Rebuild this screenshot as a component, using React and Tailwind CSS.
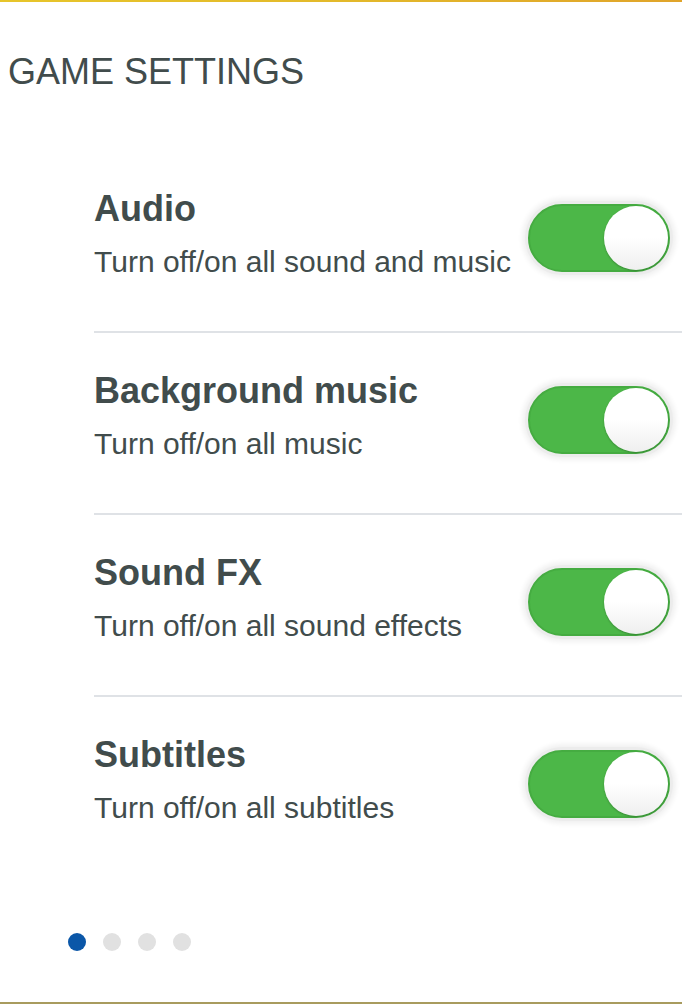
import React from 'react';

const settings = [
  { title: 'Audio', desc: 'Turn off/on all sound and music' },
  { title: 'Background music', desc: 'Turn off/on all music' },
  { title: 'Sound FX', desc: 'Turn off/on all sound effects' },
  { title: 'Subtitles', desc: 'Turn off/on all subtitles' },
];

function Toggle() {
  return (
    <div className="mt-[13px] mr-[12px] shrink-0 w-[142px] h-[68px] rounded-full bg-[#4cb748] border-2 border-[#45ac41] shadow-[0_0_0_3px_#ececec,0_0_5px_6px_#f1f1f1] flex items-center justify-end">
      <div className="w-[64px] h-[64px] rounded-full bg-gradient-to-b from-white via-white to-[#efefef] shadow-[0_1px_2px_rgba(0,0,0,0.25)]" />
    </div>
  );
}

export default function App() {
  return (
    <div className="w-[682px] h-[1004px] bg-white flex flex-col text-[#414c4c] font-['Liberation_Sans',Arial,sans-serif]">
      <div className="h-[2px] bg-gradient-to-r from-[#e7c52a] via-[#e3b92a] to-[#e0a42a]" />
      <h1 className="mt-[52px] pl-[8px] text-[36px] leading-[36px] font-normal">GAME SETTINGS</h1>

      <div className="mt-[61px] pl-[94px]">
        {settings.map((s, i) => (
          <div
            key={s.title}
            className={`flex items-start justify-between pt-[40px] pb-[54px] ${i < settings.length - 1 ? 'border-b-2 border-[#dfe2e6]' : ''}`}
          >
            <div className="flex flex-col">
              <span className="text-[36px] leading-[36px] font-bold">{s.title}</span>
              <span className="mt-5 text-[30px] leading-[30px]">{s.desc}</span>
            </div>
            <Toggle />
          </div>
        ))}
      </div>

      <div className="flex-1" />
      <div className="flex gap-[17px] pl-[68px] mb-[51px]">
        <span className="w-[18px] h-[18px] rounded-full bg-[#0b57a8]" />
        <span className="w-[18px] h-[18px] rounded-full bg-[#e1e1e1]" />
        <span className="w-[18px] h-[18px] rounded-full bg-[#e1e1e1]" />
        <span className="w-[18px] h-[18px] rounded-full bg-[#e1e1e1]" />
      </div>
      <div className="h-[2px] bg-[#a89b5e]" />
    </div>
  );
}
